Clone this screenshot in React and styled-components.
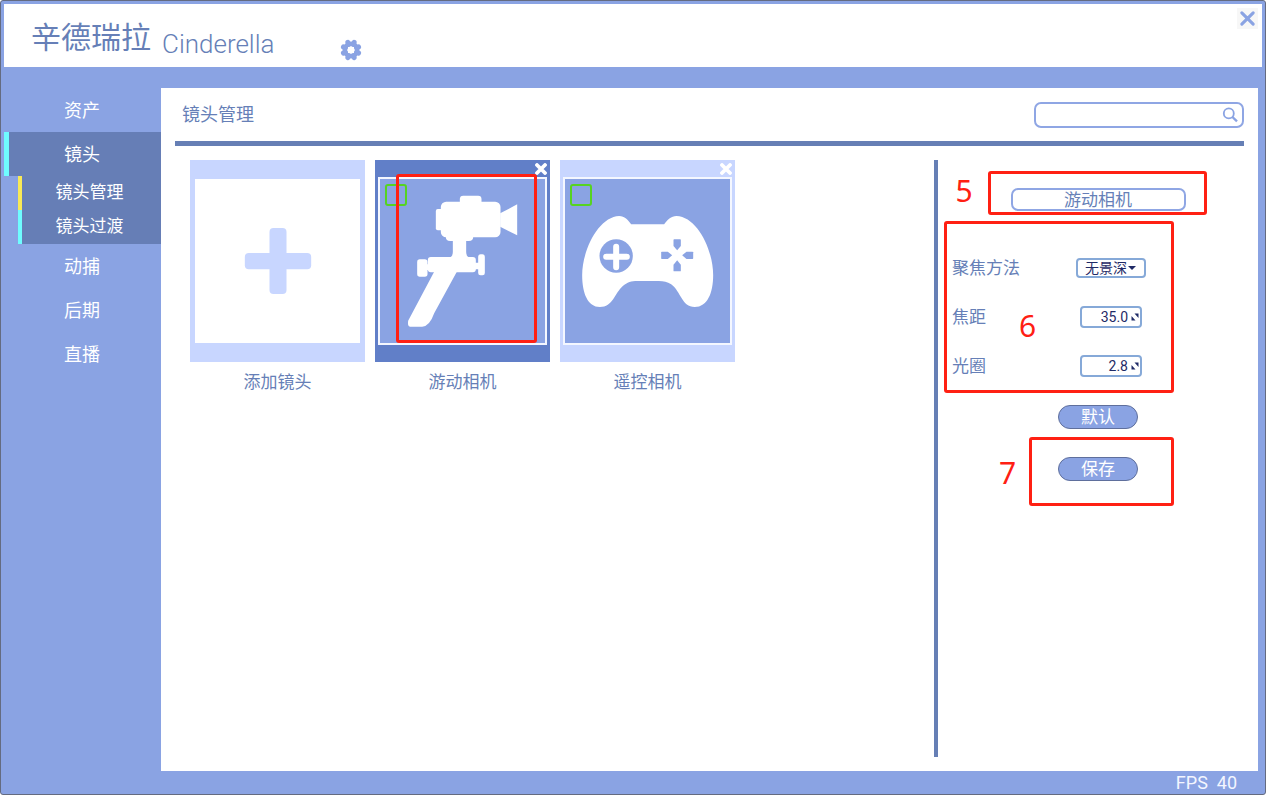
import styled, { createGlobalStyle } from "styled-components";

const GlobalStyle = createGlobalStyle`
  * {
    box-sizing: border-box;
  }

  body {
    margin: 0;
    font-family: Roboto, "Noto Sans CJK SC", sans-serif;
    color: #667fb7;
  }

  button,
  input,
  select {
    font: inherit;
    color: inherit;
    margin: 0;
    padding: 0;
    border: 0;
    background: none;
  }

  svg {
    display: block;
  }
`;

const Window = styled.div`
  display: flex;
  flex-direction: column;
  min-height: 100vh;
  border: 1px solid #646b80;
  border-radius: 3px;
  background: #8aa3e3;
`;

const Header = styled.header`
  display: flex;
  align-items: flex-start;
  height: 63px;
  margin: 3px 3px 0;
  padding: 4px 4px 0 27px;
  background: #fff;
`;

const Logo = styled.h1`
  display: flex;
  align-items: center;
  gap: 11px;
  width: 309px;
  height: 60px;
  margin: 0;
  font-size: 30px;
  font-weight: 400;
  line-height: 44px;
`;

const LogoLatin = styled.span`
  padding-top: 12px;
  font-family: Roboto, sans-serif;
  font-size: 26px;
  font-weight: 300;
`;

const IconButton = styled.button`
  display: grid;
  place-items: center;
  width: 21px;
  height: 21px;
`;

const GearButton = styled(IconButton)`
  margin-top: 31px;
`;

const CloseButton = styled(IconButton)`
  margin-left: auto;
  background: #f7f7f7;
`;

const Body = styled.div`
  display: flex;
  flex: 1;
  margin: 21px 7px 0 3px;
`;

const Sidebar = styled.nav`
  width: 157px;
  flex: none;
`;

const NavLink = styled.a`
  display: flex;
  align-items: center;
  justify-content: center;
  height: 44px;
  border-left: 5px solid ${(p) => (p.$active ? "#6ffcff" : "transparent")};
  padding: 0 6px 3px 0;
  background: ${(p) => (p.$active ? "#667eb6" : "none")};
  color: #fff;
  font-size: 18px;
  text-decoration: none;
`;

const SubLink = styled(NavLink)`
  height: 34px;
  margin-left: 14px;
  border-left: 4px solid ${(p) => (p.$current ? "#f8e957" : "#6ffcff")};
  padding: 0 4px 5px 0;
  background: #667eb6;
  font-size: 17px;
`;

const Panel = styled.main`
  display: flex;
  flex: 1;
  flex-direction: column;
  padding: 0 14px 14px;
  background: #fff;
`;

const PanelHeader = styled.div`
  display: flex;
  align-items: center;
  justify-content: space-between;
  height: 58px;
  padding-left: 7px;
  border-bottom: 5px solid #667fb5;
`;

const PanelTitle = styled.h2`
  margin: 0 0 4px;
  font-size: 18px;
  font-weight: 400;
`;

const SearchBox = styled.label`
  display: flex;
  align-items: center;
  width: 210px;
  height: 26px;
  padding: 0 4px 0 8px;
  border: 2px solid #8fa6e4;
  border-radius: 7px;

  input {
    flex: 1;
    min-width: 0;
    font-size: 14px;
    outline: none;
  }
`;

const Content = styled.div`
  display: flex;
  flex: 1;
  margin-top: 14px;
`;

const Cards = styled.div`
  display: flex;
  flex: 1;
  flex-wrap: wrap;
  align-items: flex-start;
  gap: 10px;
  padding-left: 15px;
`;

const Card = styled.figure`
  position: relative;
  width: 175px;
  margin: 0;
`;

const Frame = styled.div`
  position: relative;
  padding: 17px 3px;
  background: ${(p) => (p.$selected ? "#617fc8" : "#c8d6ff")};
`;

const Thumb = styled.button`
  display: block;
  width: 100%;
  height: 168px;
  border: 2px solid ${(p) => (p.$add ? "#c8d6ff" : "#f4f7ff")};
  background: ${(p) => (p.$add ? "#fff" : "#8aa3e3")};

  svg {
    width: 100%;
    height: 100%;
  }
`;

const Remove = styled.button`
  position: absolute;
  top: 3px;
  right: 3px;
`;

const Pick = styled.input`
  position: absolute;
  top: 24px;
  left: 10px;
  width: 22px;
  height: 22px;
  appearance: none;
  border: 2px solid #56d321;
  border-radius: 3px;

  &:checked {
    background: #56d321;
  }
`;

const Caption = styled.figcaption`
  margin-top: 8px;
  font-size: 17px;
  line-height: 24px;
  text-align: center;
`;

const Settings = styled.form`
  display: flex;
  flex-direction: column;
  align-items: center;
  width: 310px;
  padding: 28px 0 0 14px;
  border-left: 4px solid #667fb5;
`;

const NameBox = styled.div`
  position: relative;
`;

const NameInput = styled.input`
  display: block;
  width: 175px;
  height: 23px;
  padding-bottom: 3px;
  border: 2px solid #8fa6e4;
  border-radius: 7px;
  font-size: 17px;
  text-align: center;
`;

const Fields = styled.div`
  position: relative;
  display: flex;
  flex-direction: column;
  align-self: stretch;
  gap: 27px;
  margin: 46px 0 28px;
`;

const Field = styled.div`
  display: grid;
  grid-template-columns: 124px 70px;
  align-items: center;
  height: 22px;

  label {
    font-size: 17px;
    line-height: 22px;
  }
`;

const Control = styled.div`
  position: relative;
  justify-self: center;
  color: #1f2a66;
  font-size: 14px;

  svg {
    position: absolute;
    top: 50%;
    right: ${(p) => (p.$select ? 10 : 3)}px;
    transform: translateY(-50%);
    pointer-events: none;
  }
`;

const Select = styled.select`
  display: block;
  width: 70px;
  height: 20px;
  padding-left: 7px;
  appearance: none;
  border: 2px solid #86a9d8;
  border-radius: 4px;
  background: #fff;
  line-height: 16px;
`;

const NumberInput = styled.input`
  display: block;
  width: 62px;
  height: 22px;
  padding-right: 12px;
  border: 2px solid #86a9d8;
  border-radius: 4px;
  text-align: right;
`;

const Actions = styled.div`
  position: relative;
  display: flex;
  flex-direction: column;
  gap: 28px;
`;

const Action = styled.button`
  width: 80px;
  height: 24px;
  border: 1px solid #5f6f9c;
  border-radius: 12px;
  background: #8aa3e3;
  color: #fff;
  font-size: 17px;
  line-height: 20px;
`;

const Footer = styled.footer`
  height: 23px;
  padding-right: 28px;
  color: #f3f6ff;
  font-size: 18px;
  line-height: 23px;
  text-align: right;
  white-space: pre;
`;

// Red tutorial marks, laid over the control they point at
const Mark = styled.div`
  position: absolute;
  top: ${(p) => p.$top}px;
  left: ${(p) => p.$left}px;
  width: ${(p) => p.$width}px;
  height: ${(p) => p.$height}px;
  border: 3px solid #ff2013;
  border-radius: 3px;
  pointer-events: none;
`;

const Step = styled.span`
  position: absolute;
  top: ${(p) => p.$top}px;
  left: ${(p) => p.$left}px;
  color: #ff2013;
  font-family: "Noto Sans", sans-serif;
  font-size: 30px;
  line-height: 30px;
  pointer-events: none;
`;

function GearIcon() {
  return (
    <svg width="22" height="22" viewBox="-11 -11 22 22">
      <g stroke="#8aa3e3" strokeWidth="5" strokeLinecap="round">
        {[22.5, 67.5, 112.5, 157.5, 202.5, 247.5, 292.5, 337.5].map((a) => (
          <path key={a} d="M0 -6V-8.2" transform={`rotate(${a})`} />
        ))}
      </g>
      <circle r="6.2" fill="none" stroke="#8aa3e3" strokeWidth="4.6" />
    </svg>
  );
}

function CrossIcon({ size, color, width }) {
  return (
    <svg width={size} height={size} viewBox="0 0 12 12">
      <path
        d="M2 2L10 10M10 2L2 10"
        stroke={color}
        strokeWidth={width}
        strokeLinecap="round"
      />
    </svg>
  );
}

function SearchIcon() {
  return (
    <svg width="16" height="16" viewBox="0 0 16 16" fill="none">
      <g stroke="#8aa3e3" strokeWidth="1.8">
        <circle cx="6.8" cy="6.4" r="5" />
        <path d="M10.4 10L15 14.4" strokeWidth="2.4" />
      </g>
    </svg>
  );
}

function CaretIcon() {
  return (
    <svg width="8" height="5" viewBox="0 0 8 5">
      <path d="M0 0.5H8L4 4.5Z" fill="#1f2a66" />
    </svg>
  );
}

function DragIcon() {
  return (
    <svg width="8" height="8" viewBox="0 0 8 8" fill="#1f2a66">
      <path d="M3.5 0.5H7.5V5ZM0.5 3V7.5H4.5Z" />
    </svg>
  );
}

function PlusArt() {
  return (
    <svg viewBox="45 87 492 492" fill="#c8d6ff">
      <rect x="267" y="234" width="51" height="198" rx="12" />
      <rect x="193" y="309" width="199" height="49" rx="12" />
    </svg>
  );
}

function CameraArt() {
  return (
    <svg viewBox="45 87 492 492" fill="#fff">
      <rect x="283" y="137" width="65" height="40" rx="10" />
      <rect x="211" y="177" width="30" height="64" rx="6" />
      <rect x="226" y="155" width="179" height="107" rx="16" />
      <path d="M404 190L455 163V256L404 230Z" />
      <path d="M241 255H323V262Q323 273 310 273H302V306Q302 321 314 323H250Q262 321 262 306V273H254Q241 273 241 262Z" />
      <rect x="187" y="321" width="144" height="46" rx="9" />
      <rect x="155" y="328" width="31" height="52" rx="8" />
      <rect x="338" y="313" width="20" height="63" rx="7" />
      <path d="M180 343H192V360H180ZM326 338H342V358H326Z" />
      <path d="M206 365H274L206 490Q192 530 170 530H134Q125 529 128 512Z" />
    </svg>
  );
}

function GamepadArt() {
  return (
    <svg viewBox="45 87 492 492" fill="#fff">
      <path d="M206 198C222 198 233 210 242 223H341C350 210 362 198 378 198C440 200 488 300 488 375C488 430 470 471 433 471C393 471 392 425 362 403C350 395 340 393 325 393H260C243 393 230 397 217 408C192 430 188 471 148 471C112 471 95 430 95 375C95 300 145 200 206 198Z" />
      <circle cx="197" cy="318" r="50" fill="#8aa3e3" />
      <path
        d="M197 290V352M167 320H229"
        stroke="#fff"
        strokeWidth="18"
        strokeLinecap="round"
      />
      <g fill="#8aa3e3" transform="translate(380 316)">
        {[0, 90, 180, 270].map((a) => (
          <path
            key={a}
            d="M-11 -46Q-11 -48 -9 -48H9Q11 -48 11 -46V-28L0 -15L-11 -28Z"
            transform={`rotate(${a})`}
          />
        ))}
      </g>
    </svg>
  );
}

const shots = [
  { name: "添加镜头", Art: PlusArt, add: true },
  { name: "游动相机", Art: CameraArt, selected: true },
  { name: "遥控相机", Art: GamepadArt },
];

function ShotCard({ name, Art, add, selected }) {
  return (
    <Card>
      <Frame $selected={selected}>
        <Thumb type="button" aria-label={name} $add={add}>
          <Art />
        </Thumb>
        {!add && (
          <>
            <Pick type="checkbox" aria-label={name} />
            <Remove type="button" aria-label="删除">
              <CrossIcon size={12} color="#fff" width={3.8} />
            </Remove>
          </>
        )}
        {selected && <Mark $top={14} $left={21} $width={141} $height={169} />}
      </Frame>
      <Caption>{name}</Caption>
    </Card>
  );
}

export default function App() {
  return (
    <>
      <GlobalStyle />
      <Window>
        <Header>
          <Logo>
            辛德瑞拉 <LogoLatin>Cinderella</LogoLatin>
          </Logo>
          <GearButton type="button" aria-label="设置">
            <GearIcon />
          </GearButton>
          <CloseButton type="button" aria-label="关闭">
            <CrossIcon size={17} color="#8aa3e3" width={2.2} />
          </CloseButton>
        </Header>
        <Body>
          <Sidebar>
            <NavLink href="#assets">资产</NavLink>
            <NavLink href="#shots" $active>
              镜头
            </NavLink>
            <SubLink href="#manage" $current>
              镜头管理
            </SubLink>
            <SubLink href="#transition">镜头过渡</SubLink>
            <NavLink href="#mocap">动捕</NavLink>
            <NavLink href="#post">后期</NavLink>
            <NavLink href="#live">直播</NavLink>
          </Sidebar>
          <Panel>
            <PanelHeader>
              <PanelTitle>镜头管理</PanelTitle>
              <SearchBox>
                <input type="text" aria-label="搜索" />
                <SearchIcon />
              </SearchBox>
            </PanelHeader>
            <Content>
              <Cards>
                {shots.map((shot) => (
                  <ShotCard key={shot.name} {...shot} />
                ))}
              </Cards>
              <Settings>
                <NameBox>
                  <NameInput aria-label="名称" defaultValue="游动相机" />
                  <Mark $top={-17} $left={-23} $width={219} $height={44} />
                  <Step $top={-12} $left={-55}>5</Step>
                </NameBox>
                <Fields>
                  <Field>
                    <label htmlFor="focus">聚焦方法</label>
                    <Control $select>
                      <Select id="focus">
                        <option>无景深</option>
                      </Select>
                      <CaretIcon />
                    </Control>
                  </Field>
                  <Field>
                    <label htmlFor="focal">焦距</label>
                    <Control>
                      <NumberInput id="focal" inputMode="decimal" defaultValue="35.0" />
                      <DragIcon />
                    </Control>
                  </Field>
                  <Field>
                    <label htmlFor="aperture">光圈</label>
                    <Control>
                      <NumberInput id="aperture" inputMode="decimal" defaultValue="2.8" />
                      <DragIcon />
                    </Control>
                  </Field>
                  <Mark $top={-36} $left={-8} $width={230} $height={172} />
                  <Step $top={54} $left={67}>6</Step>
                </Fields>
                <Actions>
                  <Action type="reset">默认</Action>
                  <Action type="submit">保存</Action>
                  <Mark $top={32} $left={-29} $width={145} $height={69} />
                  <Step $top={53} $left={-59}>7</Step>
                </Actions>
              </Settings>
            </Content>
          </Panel>
        </Body>
        <Footer>{"FPS  40"}</Footer>
      </Window>
    </>
  );
}
